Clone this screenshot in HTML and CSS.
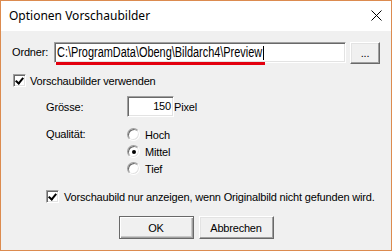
FILE: index.html
```html
<!DOCTYPE html>
<html>
<head>
    <title>Optionen Vorschaubilder</title>
    <link rel="stylesheet" href="styles.css">
</head>
<body>
    <div class="window">
        <div class="titlebar">
            <span class="title">Optionen Vorschaubilder</span>
            <svg class="close" width="11" height="11" viewBox="0 0 11 11">
                <path d="M0.5 0.5 L10.5 10.5 M10.5 0.5 L0.5 10.5" stroke="#000" stroke-width="1" fill="none"/>
            </svg>
        </div>
        <div class="content">
            <div class="folder-row">
                <span class="folder-label">Ordner:</span>
                <div class="field path-field">
                    <span class="path-text">C:\ProgramData\Obeng\Bildarch4\Preview</span>
                    <span class="caret"></span>
                    <span class="marker"></span>
                </div>
                <button class="btn browse">...</button>
            </div>

            <div class="check-row first-check">
                <span class="checkbox checked"></span>
                <span>Vorschaubilder verwenden</span>
            </div>

            <div class="indent">
                <div class="size-row">
                    <span class="opt-label">Grösse:</span>
                    <div class="field size-field">150</div>
                    <span>Pixel</span>
                </div>
                <div class="quality-row">
                    <span class="opt-label">Qualität:</span>
                    <div class="radios">
                        <div class="radio-row"><span class="radio"></span><span>Hoch</span></div>
                        <div class="radio-row"><span class="radio selected"></span><span>Mittel</span></div>
                        <div class="radio-row"><span class="radio"></span><span>Tief</span></div>
                    </div>
                </div>
                <div class="check-row second-check">
                    <span class="checkbox checked"></span>
                    <span>Vorschaubild nur anzeigen, wenn Originalbild nicht gefunden wird.</span>
                </div>
            </div>

            <div class="buttons">
                <button class="btn default">OK</button>
                <button class="btn">Abbrechen</button>
            </div>
        </div>
    </div>
</body>
</html>
```

FILE: styles.css
```css
body {
    margin: 0;
    font-family: 'Liberation Sans', Arial, sans-serif;
    font-size: 11px;
    letter-spacing: -0.17px;
    color: #000;
    white-space: nowrap;
}

.window {
    width: 392px;
    height: 251px;
    box-sizing: border-box;
    border: 1px solid #dc8b4f;
    background-color: #f0f0f0;
    display: flex;
    flex-direction: column;
}

.titlebar {
    height: 30px;
    background-color: #fff;
    display: flex;
    align-items: center;
    justify-content: space-between;
    padding: 0 9px 0 8px;
}

.title {
    font-family: 'Noto Sans', sans-serif;
    font-size: 12px;
    letter-spacing: 0;
    margin-top: -1px;
}

.close {
    display: block;
    margin-top: -1px;
}

.content {
    padding: 0 11px;
}

/* sunken 3d edit box */
.field {
    box-sizing: border-box;
    background-color: #fff;
    border: 1px solid;
    border-color: #a0a0a0 #fff #fff #a0a0a0;
    box-shadow: inset 1px 1px 0 #696969, inset -1px -1px 0 #e3e3e3;
}

.btn {
    box-sizing: border-box;
    width: 75px;
    height: 23px;
    padding: 0;
    font-family: 'Liberation Sans', Arial, sans-serif;
    font-size: 11px;
    letter-spacing: -0.2px;
    color: #000;
    background-color: #f0f0f0;
    border: 1px solid;
    border-color: #fff #696969 #696969 #fff;
    box-shadow: inset -1px -1px 0 #a0a0a0, inset 1px 1px 0 #e3e3e3;
}

.btn.default {
    border: 1px solid #696969;
    box-shadow: inset 1px 1px 0 #fff, inset -1px -1px 0 #a0a0a0, inset -2px -2px 0 #c8c8c8;
}

.folder-row {
    display: flex;
    align-items: flex-start;
    margin-top: 11px;
    height: 22px;
}

.folder-label {
    width: 42px;
    line-height: 21px;
}

.path-field {
    position: relative;
    width: 293px;
    height: 21px;
    padding-left: 2px;
}

.path-text {
    display: inline-block;
    font-family: 'Liberation Sans', Arial, sans-serif;
    font-size: 14px;
    letter-spacing: 0;
    line-height: 19px;
    transform: scaleX(0.78);
    transform-origin: left center;
}

.caret {
    position: absolute;
    left: 208px;
    top: 3px;
    width: 1px;
    height: 14px;
    background-color: #000;
}

.marker {
    position: absolute;
    left: 1px;
    top: 19px;
    width: 209px;
    height: 3px;
    background-color: #e3000f;
}

.browse {
    width: 30px;
    height: 22px;
    margin-left: 4px;
    line-height: 14px;
}

.check-row {
    display: flex;
    align-items: center;
    height: 13px;
}

.first-check {
    margin-top: 10px;
    padding-left: 1px;
    gap: 4px;
}

.second-check {
    margin-top: 13px;
    gap: 5px;
}

.checkbox {
    position: relative;
    width: 13px;
    height: 13px;
    box-sizing: border-box;
    background-color: #fff;
    border: 1px solid;
    border-color: #a0a0a0 #fff #fff #a0a0a0;
    box-shadow: inset 1px 1px 0 #696969, inset -1px -1px 0 #e3e3e3;
}

.checkbox.checked::after {
    content: "";
    position: absolute;
    left: 3px;
    top: 1px;
    width: 3px;
    height: 6px;
    border: solid #000;
    border-width: 0 2px 2px 0;
    transform: rotate(40deg);
}

.indent {
    padding-left: 34px;
}

.size-row {
    display: flex;
    align-items: center;
    margin-top: 9px;
    height: 21px;
}

.opt-label {
    width: 81px;
}

.size-field {
    width: 47px;
    height: 21px;
    text-align: right;
    line-height: 19px;
    padding-right: 2px;
}

.quality-row {
    display: flex;
    align-items: flex-start;
    margin-top: 9px;
}

.quality-row .opt-label {
    line-height: 17px;
}

.radio-row {
    display: flex;
    align-items: center;
    gap: 5px;
    height: 17px;
}

.radio {
    position: relative;
    width: 13px;
    height: 13px;
    box-sizing: border-box;
    border-radius: 50%;
    background-color: #fff;
    border: 1px solid;
    border-color: #a0a0a0 #fff #fff #a0a0a0;
    box-shadow: inset 1px 1px 0 #696969, inset -1px -1px 0 #e3e3e3;
}

.radio.selected::after {
    content: "";
    position: absolute;
    left: 3.5px;
    top: 3.5px;
    width: 4px;
    height: 4px;
    border-radius: 50%;
    background-color: #000;
}

.buttons {
    display: flex;
    justify-content: center;
    gap: 5px;
    margin-top: 13px;
}
```
